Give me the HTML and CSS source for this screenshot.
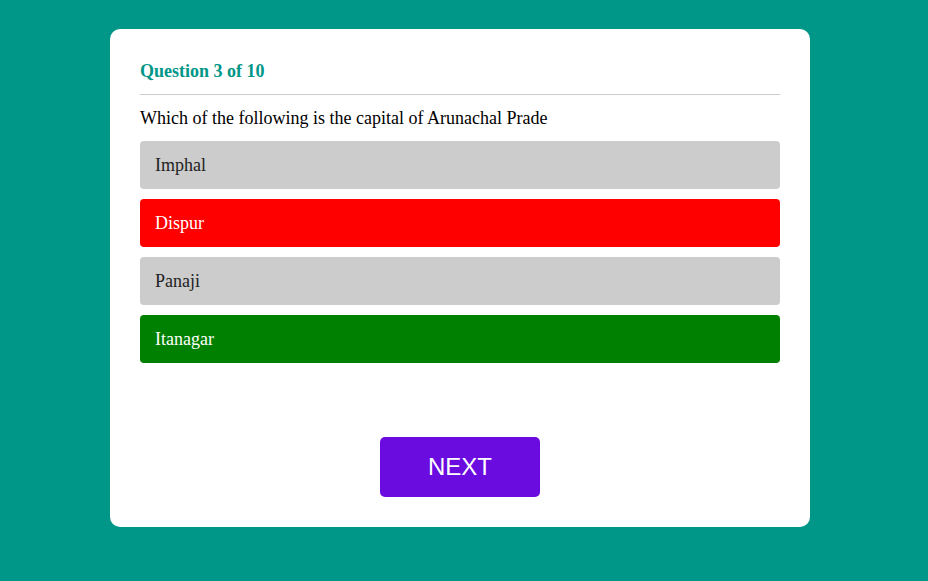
FILE: index.html
```html
<!DOCTYPE html>
<html>
<head>
<meta charset="utf-8">
<link rel="stylesheet" href="styles.css">
</head>
<body>
<div class="app">
  <div class="quiz">
    <h1 class="title">Question 3 of 10</h1>
    <p class="question">Which of the following is the capital of Arunachal Prade</p>
    <div class="answers">
      <button class="btn">Imphal</button>
      <button class="btn incorrect">Dispur</button>
      <button class="btn">Panaji</button>
      <button class="btn correct">Itanagar</button>
    </div>
    <div class="footer">
      <button class="next">NEXT</button>
    </div>
  </div>
</div>
</body>
</html>
```
FILE: styles.css
```css
* { box-sizing: border-box; }
html, body { margin: 0; padding: 0; }
body {
  background: #009688;
  font-family: "Liberation Serif", "Times New Roman", serif;
  height: 581px;
  overflow: hidden;
}
.app {
  padding: 29px 8px 0 0;
  display: flex;
  justify-content: center;
}
.quiz {
  width: 700px;
  height: 498px;
  background: #fff;
  border-radius: 10px;
  padding: 30px;
  display: flex;
  flex-direction: column;
}
.title {
  margin: 0;
  font-size: 18px;
  line-height: 24px;
  font-weight: bold;
  color: #009688;
  padding-bottom: 11px;
  border-bottom: 1px solid #cccccc;
}
.question {
  margin: 11px 0;
  font-size: 18px;
  line-height: 24px;
  color: #000;
}
.answers {
  display: flex;
  flex-direction: column;
  gap: 10px;
}
.btn {
  display: block;
  width: 100%;
  height: 48px;
  border: none;
  border-radius: 4px;
  background: #cccccc;
  color: #222;
  text-align: left;
  padding: 0 15px;
  font-family: "Liberation Serif", "Times New Roman", serif;
  font-size: 18px;
}
.btn.incorrect { background: #ff0000; color: #fff; }
.btn.correct { background: #008000; color: #fff; }
.footer {
  margin-top: auto;
  display: flex;
  justify-content: center;
}
.next {
  width: 160px;
  height: 60px;
  border: none;
  border-radius: 5px;
  background: #6a0be0;
  color: #fff;
  font-family: "Liberation Sans", Arial, sans-serif;
  font-size: 24px;
}
```
